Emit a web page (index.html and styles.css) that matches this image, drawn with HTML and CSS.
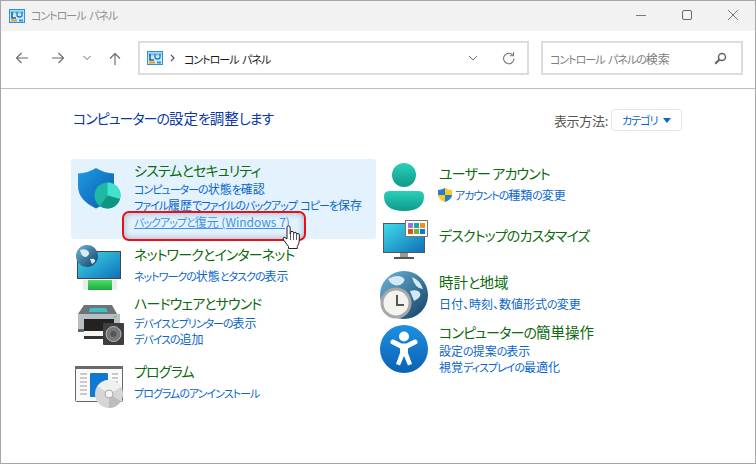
FILE: index.html
```html
<!DOCTYPE html>
<html lang="ja">
<head>
<meta charset="utf-8">
<title>コントロール パネル</title>
<link rel="stylesheet" href="styles.css">
</head>
<body>
<svg class="defs" width="0" height="0" aria-hidden="true">
  <defs>
    <symbol id="cp" viewBox="0 0 16 14">
      <rect x="0.5" y="0.5" width="15" height="13" fill="#cfeaf8" stroke="#2a93d5"/>
      <rect x="1.5" y="1.5" width="13" height="3" fill="#7cc7ee"/>
      <path d="M3 3v6h4" fill="none" stroke="#1d5fb0" stroke-width="1.6"/>
      <path d="M8 3v3q0 2 2.5 2T13 6V3" fill="none" stroke="#1d78c8" stroke-width="1.3"/>
      <rect x="2" y="10.5" width="6" height="2" fill="#f39a1d"/>
      <rect x="10" y="10.5" width="4" height="2" fill="#2a93d5"/>
    </symbol>
    <linearGradient id="gShield" x1="0" y1="0" x2="1" y2="1"><stop offset="0" stop-color="#1e9ae6"/><stop offset="1" stop-color="#0a5cab"/></linearGradient>
    <linearGradient id="gTeal" x1="0" y1="0" x2="0" y2="1"><stop offset="0" stop-color="#2ad0b8"/><stop offset="1" stop-color="#0d9a8a"/></linearGradient>
    <linearGradient id="gScreen" x1="0" y1="0" x2="1" y2="1"><stop offset="0" stop-color="#3fdcea"/><stop offset="1" stop-color="#0f6fb8"/></linearGradient>
    <linearGradient id="gGlobe" x1="0" y1="0" x2="1" y2="1"><stop offset="0" stop-color="#6bb6d8"/><stop offset="1" stop-color="#123f66"/></linearGradient>
    <linearGradient id="gAcc" x1="0" y1="0" x2="0" y2="1"><stop offset="0" stop-color="#1f8fe0"/><stop offset="1" stop-color="#0a62b4"/></linearGradient>
    <linearGradient id="gGreen" x1="0" y1="0" x2="0" y2="1"><stop offset="0" stop-color="#4be06a"/><stop offset="1" stop-color="#1fa83f"/></linearGradient>
  </defs>
</svg>
<div class="window">
  <header class="titlebar">
    <svg class="title-icon" width="16" height="14"><use href="#cp"/></svg>
    <span class="title-text"><span class="k">コントロール パネル</span></span>
    <div class="win-buttons">
      <svg width="12" height="12" viewBox="0 0 12 12"><path d="M1 6.5h10" stroke="#777" fill="none"/></svg>
      <svg width="12" height="12" viewBox="0 0 12 12"><rect x="1.5" y="1.5" width="9" height="9" rx="1.5" stroke="#666" fill="none"/></svg>
      <svg width="12" height="12" viewBox="0 0 12 12"><path d="M1 1l10 10M11 1L1 11" stroke="#777" fill="none"/></svg>
    </div>
  </header>
  <nav class="toolbar">
    <div class="nav-buttons">
      <svg class="nav-back" width="14" height="12" viewBox="0 0 14 12"><path d="M13 6H1.5M6.500 1l-5 5 5 5" stroke="#666" stroke-width="1.1" fill="none"/></svg>
      <svg width="14" height="12" viewBox="0 0 14 12"><path d="M1 6h11.500M7.500 1l5 5-5 5" stroke="#666" stroke-width="1.1" fill="none"/></svg>
      <svg width="10" height="6" viewBox="0 0 10 6"><path d="M1.500 1l3.500 3.500L8.500 1" stroke="#666" fill="none"/></svg>
      <svg width="12" height="13" viewBox="0 0 12 13"><path d="M6 13V1.500M1 6.500l5-5 5 5" stroke="#666" stroke-width="1.1" fill="none"/></svg>
    </div>
    <div class="address">
      <svg class="addr-icon" width="16" height="14"><use href="#cp"/></svg>
      <svg class="addr-sep" width="5" height="8" viewBox="0 0 5 8"><path d="M1 1l3 3-3 3" stroke="#555" stroke-width="1.2" fill="none"/></svg>
      <span class="addr-text"><span class="k">コントロール パネル</span></span>
      <svg class="addr-down" width="10" height="6" viewBox="0 0 10 6"><path d="M1 1l4 4 4-4" stroke="#777" fill="none"/></svg>
      <svg class="addr-refresh" width="13" height="13" viewBox="0 0 13 13"><path d="M10.800 3.200A5.200 5.200 0 1 0 12 6.500" stroke="#777" stroke-width="1.100" fill="none"/><path d="M7.800 3.700h3.700V0" stroke="#777" stroke-width="1.100" fill="none"/></svg>
    </div>
    <div class="search">
      <span class="search-text"><span class="k">コントロール パネルの</span>検索</span>
      <svg width="13" height="13" viewBox="0 0 13 13"><circle cx="8" cy="5" r="3.500" stroke="#666" stroke-width="1.500" fill="none"/><path d="M5.500 7.500L1.200 11.800" stroke="#666" stroke-width="2.200"/></svg>
    </div>
  </nav>
  <main class="content">
    <div class="head">
      <h1 class="heading"><span class="k">コンピューターの</span>設定<span class="k">を</span>調整<span class="k">します</span></h1>
      <div class="view">
        <span class="view-label">表示方法:</span>
        <div class="view-button"><span class="k">カテゴリ</span><i class="tri"></i></div>
      </div>
    </div>
    <div class="columns">
      <section class="col">
        <article class="cat cat-sys">
          <div class="cat-icon">
            <svg class="i-shield" width="43" height="41" viewBox="0 0 43 41">
              <path d="M18 0q8 5 18 5.500V18q0 14-18 22.500Q0 32 0 18V5.500Q10 5 18 0z" fill="url(#gShield)"/>
              <circle cx="29.500" cy="27.500" r="13" fill="#1fb8a4"/>
              <path d="M29.500 27.500V14.500A13 13 0 0 1 42 31z" fill="#42e3cd"/>
              <path d="M29.500 27.500L42 31A13 13 0 0 1 22 38z" fill="#119483"/>
            </svg>
          </div>
          <div class="cat-body">
            <a class="cat-title"><span class="k">システムとセキュリティ</span></a>
            <div class="links">
              <a class="link"><span class="k">コンピューターの</span>状態<span class="k">を</span>確認</a>
              <a class="link"><span class="k">ファイル</span>履歴<span class="k">でファイルのバックアップ コピーを</span>保存</a>
              <a class="link link-hover"><span class="k">バックアップと</span>復元 (Windows 7)</a>
            </div>
          </div>
          <div class="highlight"></div>
          <svg class="hand" width="19" height="24" viewBox="0 0 19 24">
            <path d="M5 11V2.500a1.600 1.600 0 0 1 3.200 0V9l.3-1.200a1.500 1.500 0 0 1 3 0l.2.900a1.400 1.400 0 0 1 2.800.100l.2.800a1.300 1.300 0 0 1 2.600.300V15q0 4-2 6.500v2H6.500v-2L2 15.500Q.5 13.500 1.500 12.500T5 14z" fill="#fff" stroke="#222" stroke-width="1"/>
            <path d="M8.500 9v6M11.500 9v6M14.500 9.500V15" stroke="#333" stroke-width=".8"/>
          </svg>
        </article>
        <article class="cat cat-net">
          <div class="cat-icon">
            <svg class="i-net" width="46" height="46" viewBox="0 0 46 46">
              <rect x="2.500" y="6.500" width="43" height="27" fill="url(#gScreen)" stroke="#444"/>
              <rect x="8" y="35" width="34" height="10" rx="2" fill="url(#gGreen)"/>
              <rect x="8" y="35" width="5" height="10" fill="#e9eee9"/><rect x="37" y="35" width="5" height="10" fill="#e9eee9"/>
              <circle cx="12" cy="11" r="11" fill="url(#gGlobe)"/>
              <path d="M5 5q5-2 8 1t-2 6q-5 0-6-7zM15 14q4-1 5 1t-3 4z" fill="#d9ecf5"/>
            </svg>
          </div>
          <div class="cat-body">
            <a class="cat-title"><span class="k">ネットワークとインターネット</span></a>
            <div class="links gap4">
              <a class="link"><span class="k">ネットワークの</span>状態<span class="k">とタスクの</span>表示</a>
            </div>
          </div>
        </article>
        <article class="cat cat-hw">
          <div class="cat-icon">
            <svg class="i-hw" width="46" height="41" viewBox="0 0 46 41">
              <path d="M6 0h28l5 9H0z" fill="#6d7378"/>
              <path d="M12 3h16l2 4H11z" fill="#39c3c0"/>
              <rect x="0" y="9" width="42" height="17" fill="#b7bfc5"/>
              <rect x="6" y="14" width="30" height="12" fill="#222"/>
              <rect x="0" y="24" width="6" height="3" fill="#666"/>
              <path d="M6 26h28v5H4z" fill="#f4f4f4"/>
              <rect x="6" y="31" width="24" height="3" fill="#333"/>
              <circle cx="37" cy="12" r="1" fill="#3fd24f"/>
              <rect x="25" y="18" width="21" height="22" rx="1" fill="#3c4043"/>
              <circle cx="35.500" cy="29" r="7.500" fill="#777" stroke="#bbb"/>
              <circle cx="35.500" cy="29" r="3" fill="#555"/>
            </svg>
          </div>
          <div class="cat-body">
            <a class="cat-title"><span class="k">ハードウェアとサウンド</span></a>
            <div class="links gap2">
              <a class="link"><span class="k">デバイスとプリンターの</span>表示</a>
              <a class="link"><span class="k">デバイスの</span>追加</a>
            </div>
          </div>
        </article>
        <article class="cat cat-prog">
          <div class="cat-icon">
            <svg class="i-prog" width="48" height="42" viewBox="0 0 48 42">
              <rect x=".5" y=".5" width="47" height="35" rx="1" fill="#fafafa" stroke="#666"/>
              <rect x="0" y="0" width="48" height="3" fill="#6a6a6a"/>
              <rect x="15" y="7" width="18" height="24" rx="1" fill="#0f78d0"/>
              <path d="M5 8h7M5 12h7M5 16h7M5 20h7M5 24h7M5 28h7M37 8h6M37 12h6M37 16h6" stroke="#999"/>
              <circle cx="34" cy="28" r="14" fill="#d6d6d6"/>
              <path d="M34 28L22.500 20A14 14 0 0 1 46 21z" fill="#eef2ee"/>
              <path d="M34 28l12 7A14 14 0 0 1 34 42z" fill="#bdbdbd"/>
              <circle cx="34" cy="28" r="4" fill="#f4f4f4" stroke="#aaa"/>
            </svg>
          </div>
          <div class="cat-body">
            <a class="cat-title"><span class="k">プログラム</span></a>
            <div class="links gap4">
              <a class="link"><span class="k">プログラムのアンインストール</span></a>
            </div>
          </div>
        </article>
      </section>
      <section class="col">
        <article class="cat cat-user">
          <div class="cat-icon">
            <svg class="i-user" width="40" height="48" viewBox="0 0 40 48">
              <circle cx="20" cy="12" r="12" fill="url(#gTeal)"/>
              <path d="M6 28h28q6 0 6 5 0 15-20 15T0 33q0-5 6-5z" fill="url(#gTeal)"/>
            </svg>
          </div>
          <div class="cat-body">
            <a class="cat-title"><span class="k">ユーザー アカウント</span></a>
            <div class="links gap4">
              <a class="link link-uac">
                <svg class="uac" width="14" height="14" viewBox="0 0 14 14"><path d="M7 0q3 2 7 2v5q0 4-7 7-7-3-7-7V2q4 0 7-2z" fill="#ffc81e"/><path d="M7 0v7H0V2q4 0 7-2zM7 7h7q0 4-7 7z" fill="#1c7fd8"/></svg><span class="k">アカウントの</span>種類<span class="k">の</span>変更
              </a>
            </div>
          </div>
        </article>
        <article class="cat cat-desk">
          <div class="cat-icon">
            <svg class="i-desk" width="45" height="40" viewBox="0 0 45 40">
              <rect x=".5" y="3.500" width="41" height="29" fill="url(#gScreen)" stroke="#555"/>
              <rect x="17" y="33" width="8" height="4" fill="#999"/>
              <rect x="11" y="37" width="20" height="2" fill="#555"/>
              <rect x="22.500" y=".5" width="22" height="16" fill="#fff" stroke="#777"/>
              <rect x="25" y="3" width="5" height="5" fill="#a070d8"/><rect x="31" y="3" width="5" height="5" fill="#18a8a0"/><rect x="37" y="3" width="5" height="5" fill="#f0920e"/>
              <rect x="25" y="9" width="5" height="5" fill="#e0501a"/><rect x="31" y="9" width="5" height="5" fill="#6cb82c"/><rect x="37" y="9" width="5" height="5" fill="#0f78d0"/>
            </svg>
          </div>
          <div class="cat-body">
            <a class="cat-title"><span class="k">デスクトップのカスタマイズ</span></a>
          </div>
        </article>
        <article class="cat cat-clock">
          <div class="cat-icon">
            <svg class="i-clock" width="48" height="48" viewBox="0 0 48 48">
              <circle cx="24" cy="24" r="24" fill="url(#gGlobe)"/>
              <path d="M8 8q8-5 14-2t-2 8q-8 2-12-6zM32 6q8 3 11 12-8 0-11-12zM30 20q8-2 10 2t-6 8z" fill="#d5e9f3"/>
              <circle cx="16" cy="32" r="14" fill="#f5f3f0" stroke="#a8a8a8" stroke-width="3"/>
              <path d="M17 24v10h7" stroke="#555" stroke-width="2" fill="none"/>
            </svg>
          </div>
          <div class="cat-body">
            <a class="cat-title">時計<span class="k">と</span>地域</a>
            <div class="links gap4">
              <a class="link">日付、時刻、数値形式<span class="k">の</span>変更</a>
            </div>
          </div>
        </article>
        <article class="cat cat-acc">
          <div class="cat-icon">
            <svg class="i-acc" width="48" height="48" viewBox="0 0 48 48">
              <circle cx="24" cy="24" r="24" fill="url(#gAcc)"/>
              <circle cx="24" cy="11.500" r="5" fill="#fff"/>
              <path d="M13 17l8 4h6l8-4" stroke="#fff" stroke-width="5" stroke-linecap="round" stroke-linejoin="round" fill="none"/>
              <path d="M20 20h8v8l4 11-4 1.500-4-9.500-4 9.500-4-1.500 4-11z" fill="#fff"/>
            </svg>
          </div>
          <div class="cat-body">
            <a class="cat-title"><span class="k">コンピューターの</span>簡単操作</a>
            <div class="links gap1">
              <a class="link">設定<span class="k">の</span>提案<span class="k">の</span>表示</a>
              <a class="link">視覚<span class="k">ディスプレイの</span>最適化</a>
            </div>
          </div>
        </article>
      </section>
    </div>
  </main>
</div>
</body>
</html>
```
FILE: styles.css
```css
* { box-sizing: border-box; }
html, body { margin: 0; padding: 0; background: #fff; }
body {
  width: 756px;
  height: 464px;
  overflow: hidden;
  font-family: "Noto Sans CJK JP", "Noto Sans", sans-serif;
  font-feature-settings: "palt";
}
.defs { position: absolute; }
.k { font-size: 11px; letter-spacing: -1px; word-spacing: 2px; }
.window {
  width: 756px;
  height: 464px;
  border: 1px solid #a6a6a6;
  display: flex;
  flex-direction: column;
}
.titlebar {
  height: 30px;
  background: #f2f2f2;
  display: flex;
  align-items: center;
  padding-left: 8px;
  flex: none;
}
.title-icon { margin-right: 6px; margin-top: -1px; }
.title-text { font-size: 12px; color: #8e8e8e; line-height: 30px; margin-top: -2px; }
.win-buttons { margin-left: auto; display: flex; gap: 34px; padding-right: 16px; margin-top: -3px; }
.toolbar {
  height: 58px;
  flex: none;
  display: flex;
  align-items: center;
  border-bottom: 1px solid #bdbdbd;
  padding-bottom: 3px;
}
.nav-buttons { width: 137px; display: flex; align-items: center; padding-left: 14px; gap: 17px; }
.nav-back { margin-right: 5px; }
.address {
  width: 391px;
  height: 34px;
  border: 2px solid #dcdcdc;
  display: flex;
  align-items: center;
  padding-left: 7px;
}
.addr-sep { margin-left: 7px; }
.addr-text { font-size: 12px; color: #1a1a1a; margin-left: 9px; }
.addr-down { margin-left: auto; }
.addr-refresh { margin-left: 24px; margin-right: 12px; }
.search {
  width: 202px;
  height: 34px;
  margin-left: 12px;
  border: 2px solid #dcdcdc;
  display: flex;
  align-items: center;
  justify-content: space-between;
  padding: 0 14px 0 7px;
}
.search-text { font-size: 12px; color: #7d7d7d; }
.content { flex: 1; padding: 20px 0 0 70px; }
.head { display: flex; justify-content: space-between; align-items: center; height: 22px; padding-right: 73px; }
.heading { margin: 0 0 4px 2px; font-size: 14.500px; font-weight: 400; color: #0a36a8; line-height: 22px; }
.heading .k { font-size: 14px; letter-spacing: -1px; }
.cat-title .k { font-size: 14px; letter-spacing: -0.85px; word-spacing: 0; }
.view { display: flex; align-items: center; gap: 3px; }
.view-label { font-size: 13px; color: #555; letter-spacing: -0.3px; }
.view-button {
  width: 71px;
  height: 22px;
  border: 1px solid #e6e6e6;
  border-radius: 3px;
  display: flex;
  align-items: center;
  padding-left: 10px;
  gap: 6px;
  font-size: 12px;
  color: #0066cc;
}
.tri { width: 0; height: 0; border: 4.500px solid transparent; border-top: 5px solid #0a66cc; border-bottom: 0; }
.columns { display: grid; grid-template-columns: 305px 1fr; margin-top: 28px; }
.col { display: flex; flex-direction: column; }
.cat { display: flex; padding-top: 2px; }
.cat-icon { width: 63px; height: 0; flex: none; }
.cat-icon svg { display: block; }
.cat-body { display: flex; flex-direction: column; }
.cat-title { font-size: 14.500px; line-height: 20px; height: 20px; color: #0b6a0b; white-space: nowrap; }
.cat-sys .cat-title { margin-top: -1px; margin-bottom: 1px; }
.links { display: flex; flex-direction: column; }
.link { font-size: 12px; line-height: 16px; height: 16px; color: #0a66cc; white-space: nowrap; display: block; }
.gap1 { margin-top: 1px; }
.gap2 { margin-top: 2px; }
.gap4 { margin-top: 4px; }
.cat-sys { height: 80px; background: #e3f2fd; border-radius: 3px; position: relative; }
.cat-sys .link:last-child { margin-top: 1px; }
.link-hover { color: #3d93ea; text-decoration: underline; }
.link-uac { margin-left: -1px; }
.uac { margin-right: 3px; vertical-align: -2px; }
.highlight {
  position: absolute;
  left: 51px;
  top: 52px;
  width: 184px;
  height: 30px;
  border: 2px solid #e5101c;
  border-radius: 7px;
  box-shadow: inset 0 0 7px rgba(70, 90, 120, .45);
}
.hand { position: absolute; left: 211px; top: 66px; }
.cat-net { margin-top: 3px; }
.cat-hw { margin-top: 7px; }
.cat-prog { margin-top: 12px; }
.cat-user { margin-top: 2px; }
.cat-desk { margin-top: 20px; }
.cat-clock { margin-top: 25px; }
.cat-acc { margin-top: 8px; }
.i-shield { margin: 7px 0 0 7px; }
.i-net { margin: 1px 0 0 4px; }
.i-hw { margin: 12px 0 0 7px; }
.i-prog { margin: 5px 0 0 4px; }
.i-user { margin: 0 0 0 8px; }
.i-desk { margin: -5px 0 0 7px; }
.i-clock { margin: -1px 0 0 4px; }
.i-acc { margin: 3px 0 0 4px; }
```
